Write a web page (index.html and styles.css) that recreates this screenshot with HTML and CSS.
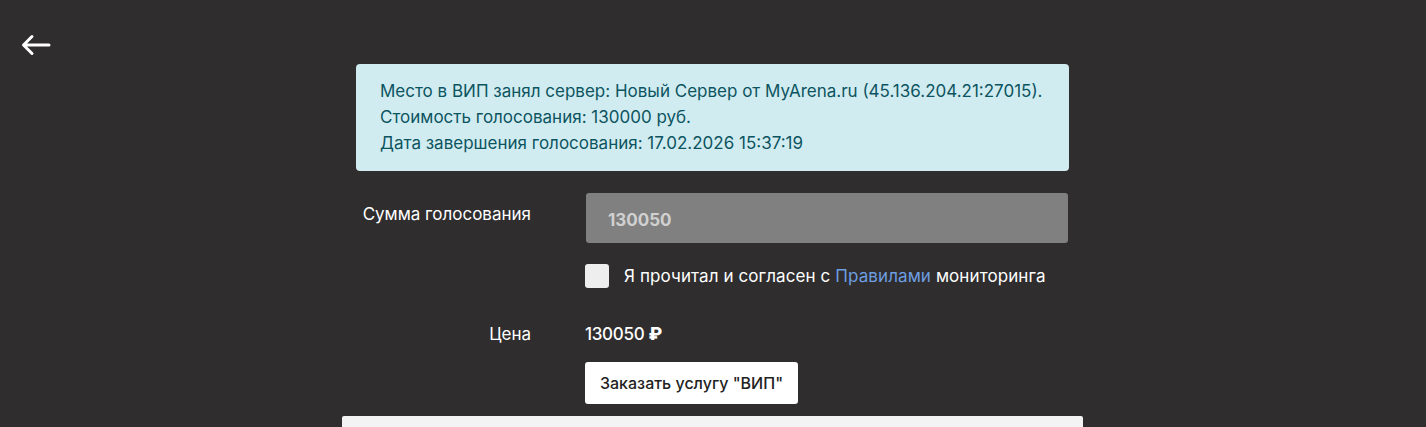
FILE: index.html
```html
<!DOCTYPE html>
<html lang="ru">

<head>
    <meta charset="UTF-8">
    <meta name="viewport" content="width=device-width, initial-scale=1.0">
    <title>Заказать услугу ВИП</title>
    <link rel="stylesheet" href="styles.css">
</head>

<body>
    <a class="back" href="#" aria-label="Назад">
        <svg width="30" height="22" viewBox="0 0 30 22">
            <path d="M28 11H3M11 2.5L2.5 11L11 19.5" fill="none" stroke="#fff" stroke-width="3" stroke-linecap="round" stroke-linejoin="round"/>
        </svg>
    </a>
    <div class="container">
        <div class="alert">
            Место в ВИП занял сервер: Новый Сервер от MyArena.ru (45.136.204.21:27015).<br>
            Стоимость голосования: 130000 руб.<br>
            Дата завершения голосования: 17.02.2026 15:37:19
        </div>
        <form class="vip-form">
            <label for="VoteSum" class="label label-top">Сумма голосования</label>
            <input type="text" id="VoteSum" name="VoteSum" value="130050" disabled>

            <span></span>
            <label class="agree">
                <input type="checkbox" name="Agree">
                <span>Я прочитал и согласен с <a href="#">Правилами</a> мониторинга</span>
            </label>

            <span class="label price-row">Цена</span>
            <span class="price price-row">130050 <b>₽</b></span>

            <span></span>
            <div><button type="button" class="order">Заказать услугу "ВИП"</button></div>
        </form>
        <div class="panel"></div>
    </div>
</body>

</html>
```

FILE: styles.css
```css
/* Page */
body {
    font-family: Inter, "Noto Sans", sans-serif;
    margin: 0;
    padding: 0;
    background-color: #2f2d2e;
    color: #fff;
    height: 427px;
    overflow: hidden;
}

.back {
    position: absolute;
    top: 34px;
    left: 21px;
    display: block;
    line-height: 0;
}

.container {
    width: 741px;
    margin: 0 auto 0 calc(50% - 371px);
    padding-top: 64px;
}

.alert {
    margin: 0 14px;
    padding: 14px 24px 15px;
    background-color: #d1ecf1;
    color: #0c5460;
    border-radius: 4px;
    font-size: 17px;
    line-height: 26px;
}

/* Form grid */
.vip-form {
    display: grid;
    grid-template-columns: 189px 484px;
    column-gap: 54px;
    margin: 22px 14px 0 0;
    align-items: center;
}

.label {
    text-align: right;
    font-size: 17px;
    line-height: 20px;
}

.label-top {
    align-self: start;
    padding-top: 11px;
}

.vip-form input[type="text"] {
    width: 482px;
    height: 50px;
    margin-left: 1px;
    padding: 3px 22px 0;
    box-sizing: border-box;
    border: none;
    border-radius: 3px;
    background-color: #808080;
    color: #d0d0d0;
    font-family: inherit;
    font-size: 17px;
    font-weight: 700;
}

.agree {
    display: flex;
    align-items: center;
    gap: 15px;
    margin-top: 21px;
    font-size: 17px;
    letter-spacing: 0.1px;
}

.agree input {
    appearance: none;
    width: 24px;
    height: 24px;
    margin: 0;
    border-radius: 3px;
    background-color: #eee;
}

.agree a {
    color: #6d9ee0;
    text-decoration: none;
}

.price-row {
    margin-top: 36px;
    line-height: 20px;
}

.price {
    font-size: 17px;
    font-weight: 500;
    letter-spacing: -0.3px;
}

.price b {
    font-size: 18px;
    font-weight: 800;
}

.order {
    margin-top: 18px;
    height: 42px;
    padding: 0 15px;
    border: none;
    border-radius: 3px;
    background-color: #fff;
    color: #222;
    font-family: inherit;
    font-size: 16px;
    font-weight: 500;
    cursor: pointer;
}

.panel {
    margin-top: 12px;
    height: 11px;
    background-color: #f3f3f3;
    border-radius: 2px 2px 0 0;
}
```
